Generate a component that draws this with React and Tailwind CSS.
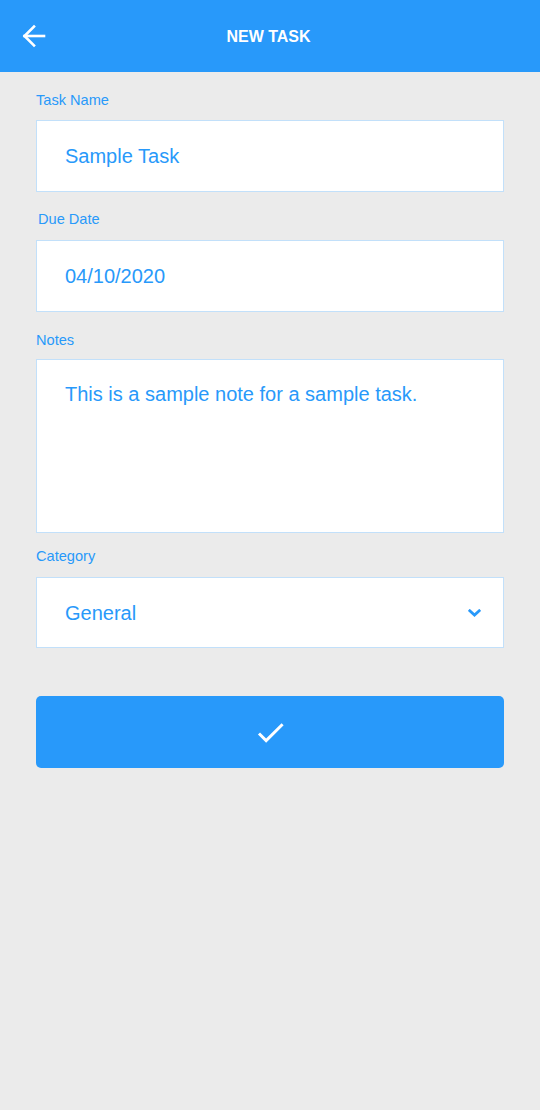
import { MdCheck } from 'react-icons/md';

function Label({ children, className = '' }) {
  return (
    <label className={`block text-[14.6px] leading-[20px] text-[#2899fa] ${className}`}>
      {children}
    </label>
  );
}

export default function App() {
  return (
    <div className="w-[540px] min-h-[1110px] bg-[#ebebeb] font-['Liberation_Sans',Arial,sans-serif]">
      {/* Header */}
      <header className="h-[72px] bg-[#2899fa] flex items-center">
        <button className="w-[68px] h-full pl-[22px] flex items-center">
          <svg width="24" height="26" viewBox="0 0 24 26" fill="none" stroke="white" strokeWidth="2.6" strokeLinecap="square">
            <path d="M2.5 13H22" />
            <path d="M12 3.5L2.5 13L12 22.5" />
          </svg>
        </button>
        <h1 className="flex-1 text-center text-white font-bold text-[16px] leading-[20px] pt-[2px] pr-[3px]">NEW TASK</h1>
        <div className="w-[68px]" />
      </header>

      {/* Form */}
      <div className="px-9 pt-[18px]">
        <Label className="mb-[10px]">Task Name</Label>
        <input
          readOnly
          defaultValue="Sample Task"
          className="w-full h-[72px] bg-white border border-[#c2e0fa] pl-[28px] text-[20px] text-[#2899fa] outline-none"
        />

        <Label className="mt-[17px] mb-[11px] pl-[2px]">Due Date</Label>
        <input
          readOnly
          defaultValue="04/10/2020"
          className="w-full h-[72px] bg-white border border-[#c2e0fa] pl-[28px] text-[20px] text-[#2899fa] outline-none"
        />

        <Label className="mt-[18px] mb-[9px]">Notes</Label>
        <textarea
          readOnly
          defaultValue="This is a sample note for a sample task."
          className="block w-full h-[174px] bg-white border border-[#c2e0fa] pl-[28px] pt-[22px] pr-4 text-[20px] leading-[24px] text-[#2899fa] outline-none resize-none"
        />

        <Label className="mt-[13px] mb-[11px]">Category</Label>
        <div className="w-full h-[71px] bg-white border border-[#c2e0fa] pl-[28px] pr-[22px] flex items-center justify-between">
          <span className="text-[20px] text-[#2899fa]">General</span>
          <svg width="13" height="8" viewBox="0 0 13 8" fill="none" stroke="#2899fa" strokeWidth="2.8" strokeLinecap="square">
            <path d="M1.8 1.8L6.5 6L11.2 1.8" />
          </svg>
        </div>

        <button className="mt-[48px] w-full h-[72px] rounded-[5px] bg-[#2899fa] flex items-center justify-center text-white">
          <MdCheck size={35} />
        </button>
      </div>
    </div>
  );
}
